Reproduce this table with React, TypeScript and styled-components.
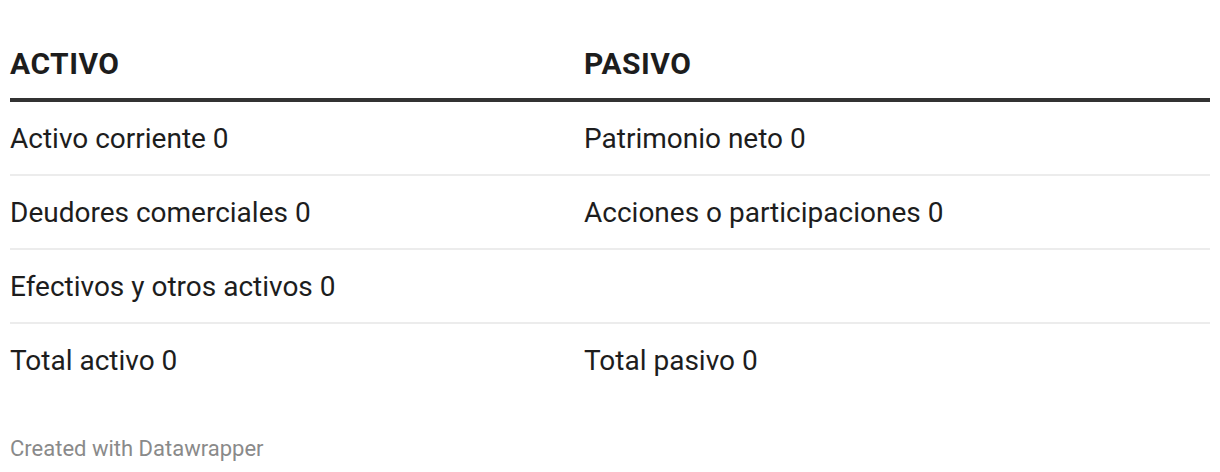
import React from "react";
import styled, { createGlobalStyle } from "styled-components";

const GlobalStyle = createGlobalStyle`
  body {
    margin: 0;
    background: #ffffff;
    font-family: Roboto, "Liberation Sans", sans-serif;
    color: #1d1d1d;
  }
`;

type Row = { left: string; right: string };

const rows: Row[] = [
  { left: "Activo corriente 0", right: "Patrimonio neto 0" },
  { left: "Deudores comerciales 0", right: "Acciones o participaciones 0" },
  { left: "Efectivos y otros activos 0", right: "" },
  { left: "Total activo 0", right: "Total pasivo 0" },
];

const App = () => {
  return (
    <StPage>
      <GlobalStyle />
      <StTable>
        <StHeadRow>
          <StHeadCell>ACTIVO</StHeadCell>
          <StHeadCell>PASIVO</StHeadCell>
        </StHeadRow>
        {rows.map((row, idx) => (
          <StRow key={idx} $last={idx === rows.length - 1}>
            <StCell>{row.left}</StCell>
            <StCell>{row.right}</StCell>
          </StRow>
        ))}
      </StTable>
      <StFooter>Created with Datawrapper</StFooter>
    </StPage>
  );
};

export default App;

const StPage = styled.div`
  padding: 0 10px;
`;

const StTable = styled.div`
  display: flex;
  flex-direction: column;
`;

const StHeadRow = styled.div`
  display: grid;
  grid-template-columns: 574px 1fr;
  border-bottom: 4px solid #333333;
`;

const StHeadCell = styled.div`
  padding: 48px 0 18px;
  font-size: 30px;
  line-height: 32px;
  font-weight: 700;
  letter-spacing: 0.5px;
`;

const StRow = styled.div<{ $last: boolean }>`
  display: grid;
  grid-template-columns: 574px 1fr;
  border-bottom: ${(p) => (p.$last ? "none" : "2px solid #ececec")};
`;

const StCell = styled.div`
  padding: 21px 0 19px;
  font-size: 28px;
  line-height: 32px;
  min-height: 32px;
`;

const StFooter = styled.div`
  margin-top: 40px;
  font-size: 22px;
  line-height: 26px;
  color: #8a8a8a;
`;
